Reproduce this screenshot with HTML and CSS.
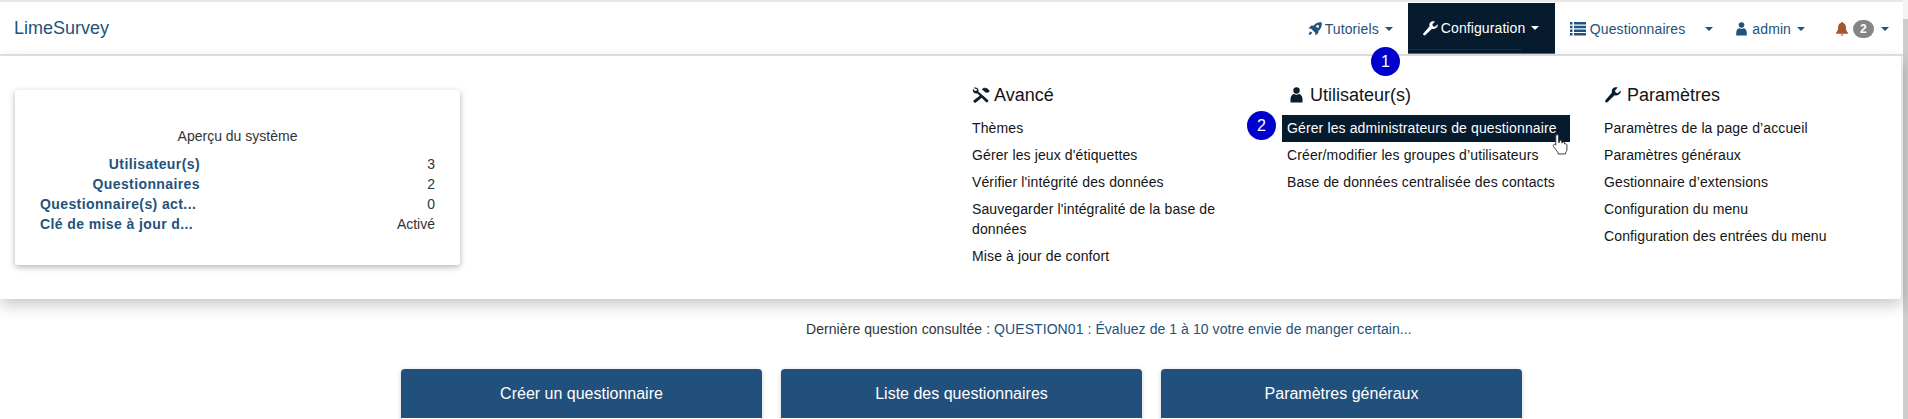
FILE: index.html
```html
<!DOCTYPE html>
<html lang="fr">
<head>
  <meta charset="UTF-8">
  <title>LimeSurvey</title>
  <link rel="stylesheet" href="styles.css">
</head>
<body>
  <div class="page">
    <nav class="navbar">
      <a class="brand">LimeSurvey</a>
      <ul class="nav-menu">
        <li class="nav-item tutorials">
          <svg class="icon" viewBox="0 0 16 16"><path d="M15.600.4c-3.600-.5-6.600.7-9 3.600L3.400 4.300.6 7.300l3 .5 4.600 4.600.5 3 3-2.800.3-2.600c2.900-2.400 4.100-5.400 3.600-9.600zM11 6.600a1.600 1.600 0 1 1 0-3.200 1.600 1.600 0 0 1 0 3.200zM3.200 10.800c-1.500.6-2.200 2-2.400 4 2-.2 3.400-.9 4-2.400z"/></svg>
          Tutoriels <span class="caret"></span>
        </li>
        <li class="nav-item active">
          <svg class="icon" viewBox="0 0 16 16"><path d="M15.600 3.400l-2.800 2.800-2.200-.6-.6-2.200L12.800.6C10.800-.2 8.500.3 7.400 2c-.7 1.100-.8 2.400-.4 3.600L.6 13a1.400 1.400 0 0 0 2 2l7-6.800c1.300.4 2.800.3 3.900-.5 1.600-1.100 2.700-2.400 2.100-4.300z"/></svg>
          Configuration <span class="caret"></span>
        </li>
        <li class="nav-item surveys">
          <svg class="icon list" viewBox="0 0 16 14"><path d="M0 0h2.500v2.500H0zM4 0h12v2.500H4zM0 3.700h2.500v2.500H0zM4 3.700h12v2.500H4zM0 7.400h2.500v2.500H0zM4 7.400h12v2.500H4zM0 11.100h2.500v2.500H0zM4 11.100h12v2.500H4z"/></svg>
          Questionnaires <span class="caret far"></span>
        </li>
        <li class="nav-item admin">
          <svg class="icon user" viewBox="0 0 12 16"><circle cx="6" cy="3.500" r="3.200"/><path d="M0 15.500v-3.500c0-3 2-5 3.500-5 .7.500 1.500.8 2.500.8s1.800-.3 2.500-.8c1.500 0 3.500 2 3.500 5v3.500z"/></svg>
          admin <span class="caret"></span>
        </li>
        <li class="nav-item alerts">
          <svg class="icon bell" viewBox="0 0 14 16"><path d="M7 0c-.7 0-1.200.5-1.200 1.100C3.600 1.600 2.500 3.400 2.500 6c0 3.600-1 5-2.300 6.300v1.200h13.600v-1.200C12.500 11 11.500 9.600 11.500 6c0-2.600-1.100-4.400-3.300-4.900C8.200.5 7.700 0 7 0zM5.200 14.300a1.900 1.900 0 0 0 3.600 0z"/></svg>
          <span class="count">2</span><span class="caret"></span>
        </li>
      </ul>
    </nav>

    <div class="dropdown-panel">
      <span class="step step-one">1</span>
      <section class="overview">
        <h2 class="overview-title">Aperçu du système</h2>
        <dl class="stats">
          <dt>Utilisateur(s)</dt><dd>3</dd>
          <dt>Questionnaires</dt><dd>2</dd>
          <dt class="cut">Questionnaire(s) act...</dt><dd>0</dd>
          <dt class="cut">Clé de mise à jour d...</dt><dd>Activé</dd>
        </dl>
      </section>

      <div class="menu-col col-advanced">
        <h3>
          <svg class="head-icon" viewBox="0 0 18 16"><path d="M9.800 2.200L12.300.4l1.300 1 .9-.6 3.300 3.300-1.900 2-1-1-.9.9-1.500-1.400zM7.700 8.800l2 2-5.800 4.700a1.600 1.600 0 0 1-2.200-2.200zM1.500.9c1.300-.7 3-.6 4 .4.900.9 1.200 2.200.8 3.300l9.800 8.300a1.600 1.600 0 0 1-2.200 2.200L5.300 6.200C4.100 6.700 2.700 6.400 1.800 5.500.8 4.500.6 3.300 1 2.100l2 2 1.700-.3.300-1.500z"/></svg>
          Avancé
        </h3>
        <ul>
          <li>Thèmes</li>
          <li>Gérer les jeux d'étiquettes</li>
          <li>Vérifier l'intégrité des données</li>
          <li>Sauvegarder l'intégralité de la base de données</li>
          <li>Mise à jour de confort</li>
        </ul>
      </div>

      <div class="menu-col col-users">
        <h3>
          <svg class="head-icon user" viewBox="0 0 12 16"><circle cx="6" cy="3.500" r="3.200"/><path d="M0 15.500v-3.500c0-3 2-5 3.500-5 .7.500 1.500.8 2.500.8s1.800-.3 2.500-.8c1.500 0 3.500 2 3.500 5v3.500z"/></svg>
          Utilisateur(s)
        </h3>
        <ul>
          <li class="selected">
            <span class="step step-two">2</span>
            Gérer les administrateurs de questionnaire
            <svg class="hand" viewBox="0 0 18 24"><path d="M5.500 1.500c.8 0 1.500.7 1.500 1.500v7l1-.3V8.500c0-1.200 2.200-1.200 2.200 0v1.800l.8-.1c.3-1.300 2.300-1.200 2.300.2v1l.5-.1c1.100-.3 2 .5 2 1.500v4c0 2-.8 3.200-1.500 4.200v1H6.500v-1.200C5 18.600 3 16 1.500 14c-1-1.400.8-3 2.300-1.600l.2.200V3c0-.8.700-1.500 1.500-1.500z"/></svg>
          </li>
          <li>Créer/modifier les groupes d’utilisateurs</li>
          <li>Base de données centralisée des contacts</li>
        </ul>
      </div>

      <div class="menu-col col-settings">
        <h3>
          <svg class="head-icon" viewBox="0 0 16 16"><path d="M15.600 3.400l-2.800 2.800-2.200-.6-.6-2.200L12.800.6C10.800-.2 8.500.3 7.400 2c-.7 1.100-.8 2.400-.4 3.600L.6 13a1.400 1.400 0 0 0 2 2l7-6.800c1.300.4 2.800.3 3.900-.5 1.600-1.100 2.700-2.400 2.100-4.300z"/></svg>
          Paramètres
        </h3>
        <ul>
          <li>Paramètres de la page d’accueil</li>
          <li>Paramètres généraux</li>
          <li>Gestionnaire d’extensions</li>
          <li>Configuration du menu</li>
          <li>Configuration des entrées du menu</li>
        </ul>
      </div>
    </div>

    <p class="last-question">Dernière question consultée : <a>QUESTION01 : Évaluez de 1 à 10 votre envie de manger certain...</a></p>

    <div class="boxes">
      <div class="box"><div class="box-heading">Créer un questionnaire</div></div>
      <div class="box"><div class="box-heading">Liste des questionnaires</div></div>
      <div class="box"><div class="box-heading">Paramètres généraux</div></div>
    </div>
  </div>
  <div class="scrollbar"><div class="scroll-thumb"></div></div>
</body>
</html>
```

FILE: styles.css
```css
html, body {
  margin: 0;
  padding: 0;
  height: 419px;
  overflow: hidden;
}
body {
  display: flex;
  font-family: "Liberation Sans", Arial, sans-serif;
  font-size: 14px;
  line-height: 20px;
  color: #333;
  background: #fff;
}
ul {
  list-style: none;
  margin: 0;
  padding: 0;
}
.page {
  flex: 1;
  min-width: 0;
  border-top: 2px solid #e7e7e7;
}
.scrollbar {
  width: 5px;
  padding-top: 19px;
  background: #f3f3f3;
}
.scroll-thumb {
  height: 400px;
  background: #cdcdcd;
}

/* top bar */
.navbar {
  display: flex;
  justify-content: space-between;
  height: 51px;
  padding-top: 1px;
  border-bottom: 2px solid #e3e3e3;
}
.brand {
  padding: 15px 14px;
  font-size: 18px;
  color: #23527c;
}
.nav-menu {
  display: flex;
  color: #23527c;
  letter-spacing: .1px;
}
.nav-item {
  position: relative;
  display: flex;
  align-items: center;
  height: 51px;
  white-space: nowrap;
}
.nav-item .icon {
  width: 14px;
  height: 14px;
  margin-right: 3px;
  fill: currentColor;
}
.caret {
  display: inline-block;
  margin-left: 6px;
  border-top: 4px solid currentColor;
  border-left: 4px solid transparent;
  border-right: 4px solid transparent;
}
.caret.far {
  margin-left: 20px;
}
.tutorials {
  margin-right: 15px;
}
.nav-item.active {
  width: 147px;
  padding-left: 15px;
  box-sizing: border-box;
  background: #071b2e;
  color: #fff;
  border-bottom: 1px solid #3a6f9e;
}
.nav-item.active::after {
  content: "";
  position: absolute;
  left: 0;
  bottom: 3px;
  width: 114px;
  height: 1px;
  background: #1d2f40;
}
.nav-item.active .icon {
  width: 15px;
  height: 15px;
}
.surveys {
  margin-left: 15px;
}
.surveys .icon.list {
  width: 16px;
  height: 14px;
  margin-right: 4px;
}
.admin {
  margin-left: 23px;
}
.admin .icon.user {
  width: 11px;
  margin-right: 5px;
}
.alerts {
  margin-left: 30px;
  margin-right: 14px;
}
.alerts .icon.bell {
  margin-right: 4px;
  color: #a5542b;
}
.count {
  width: 21px;
  height: 18px;
  border-radius: 9px;
  background: #858585;
  color: #fff;
  font-size: 12px;
  font-weight: bold;
  line-height: 18px;
  text-align: center;
}
.alerts .caret {
  margin-left: 7px;
}

/* open menu */
.dropdown-panel {
  position: relative;
  display: grid;
  grid-template-columns: 972px 318px 314px 1fr;
  height: 243px;
  margin-right: 1px;
  border-right: 1px solid #e0e0e0;
  border-bottom-right-radius: 4px;
  background: #fff;
  box-shadow: 0 6px 16px rgba(0, 0, 0, .22);
}
.step {
  position: absolute;
  width: 29px;
  height: 29px;
  border-radius: 50%;
  background: #0000cc;
  color: #fff;
  font-size: 16px;
  line-height: 29px;
  text-align: center;
}
.step-one {
  top: -9px;
  left: 1371px;
}
.step-two {
  top: -4px;
  left: -35px;
}
.overview {
  align-self: start;
  box-sizing: border-box;
  width: 445px;
  height: 175px;
  margin: 34px 0 0 15px;
  padding: 36px 25px 0;
  border-radius: 3px;
  box-shadow: 0 2px 6px rgba(0, 0, 0, .3);
}
.overview-title {
  margin: 0 0 8px;
  font-size: 14px;
  font-weight: normal;
  line-height: 20px;
  text-align: center;
}
.stats {
  display: grid;
  grid-template-columns: 160px 1fr;
  margin: 0;
}
.stats dt {
  font-weight: bold;
  text-align: right;
  color: #23527c;
  letter-spacing: .4px;
}
.stats dt.cut {
  text-align: left;
}
.stats dd {
  margin: 0;
  text-align: right;
}
.menu-col {
  padding-top: 26px;
  color: #141414;
  letter-spacing: .12px;
}
.menu-col h3 {
  display: flex;
  align-items: center;
  margin: 0 0 7px;
  font-size: 18px;
  font-weight: normal;
  line-height: 26px;
  letter-spacing: 0;
}
.head-icon {
  width: 18px;
  height: 16px;
  margin-right: 5px;
  fill: #0b1d2e;
}
.col-advanced .head-icon {
  margin-right: 4px;
}
.head-icon.user {
  width: 13px;
  margin-right: 7px;
}
.menu-col li {
  position: relative;
  width: 262px;
  padding: 3px 0 4px;
}
.col-users li {
  width: 288px;
  margin-left: -8px;
  padding-left: 5px;
  box-sizing: border-box;
}
.menu-col li.selected {
  background: #071b2e;
  color: #fff;
}
.hand {
  position: absolute;
  top: 18px;
  left: 270px;
  width: 17px;
  height: 23px;
  fill: #fff;
  stroke: #333;
  stroke-width: 1;
}
.col-settings li {
  width: 280px;
}

/* below the menu */
.last-question {
  margin: 20px 0 0;
  padding-left: 806px;
  letter-spacing: .07px;
}
.last-question a {
  color: #23527c;
}
.boxes {
  display: flex;
  gap: 19px;
  margin: 30px 0 0 401px;
}
.box {
  width: 361px;
  height: 60px;
  border: 1px solid #ddd;
  border-top: 0;
  border-radius: 4px 4px 0 0;
  box-sizing: border-box;
  box-shadow: 0 1px 4px rgba(0, 0, 0, .2);
}
.box-heading {
  height: 49px;
  margin: 0 -1px;
  border-radius: 4px 4px 0 0;
  background: #22507d;
  color: #fff;
  font-size: 16px;
  line-height: 49px;
  text-align: center;
}
```
